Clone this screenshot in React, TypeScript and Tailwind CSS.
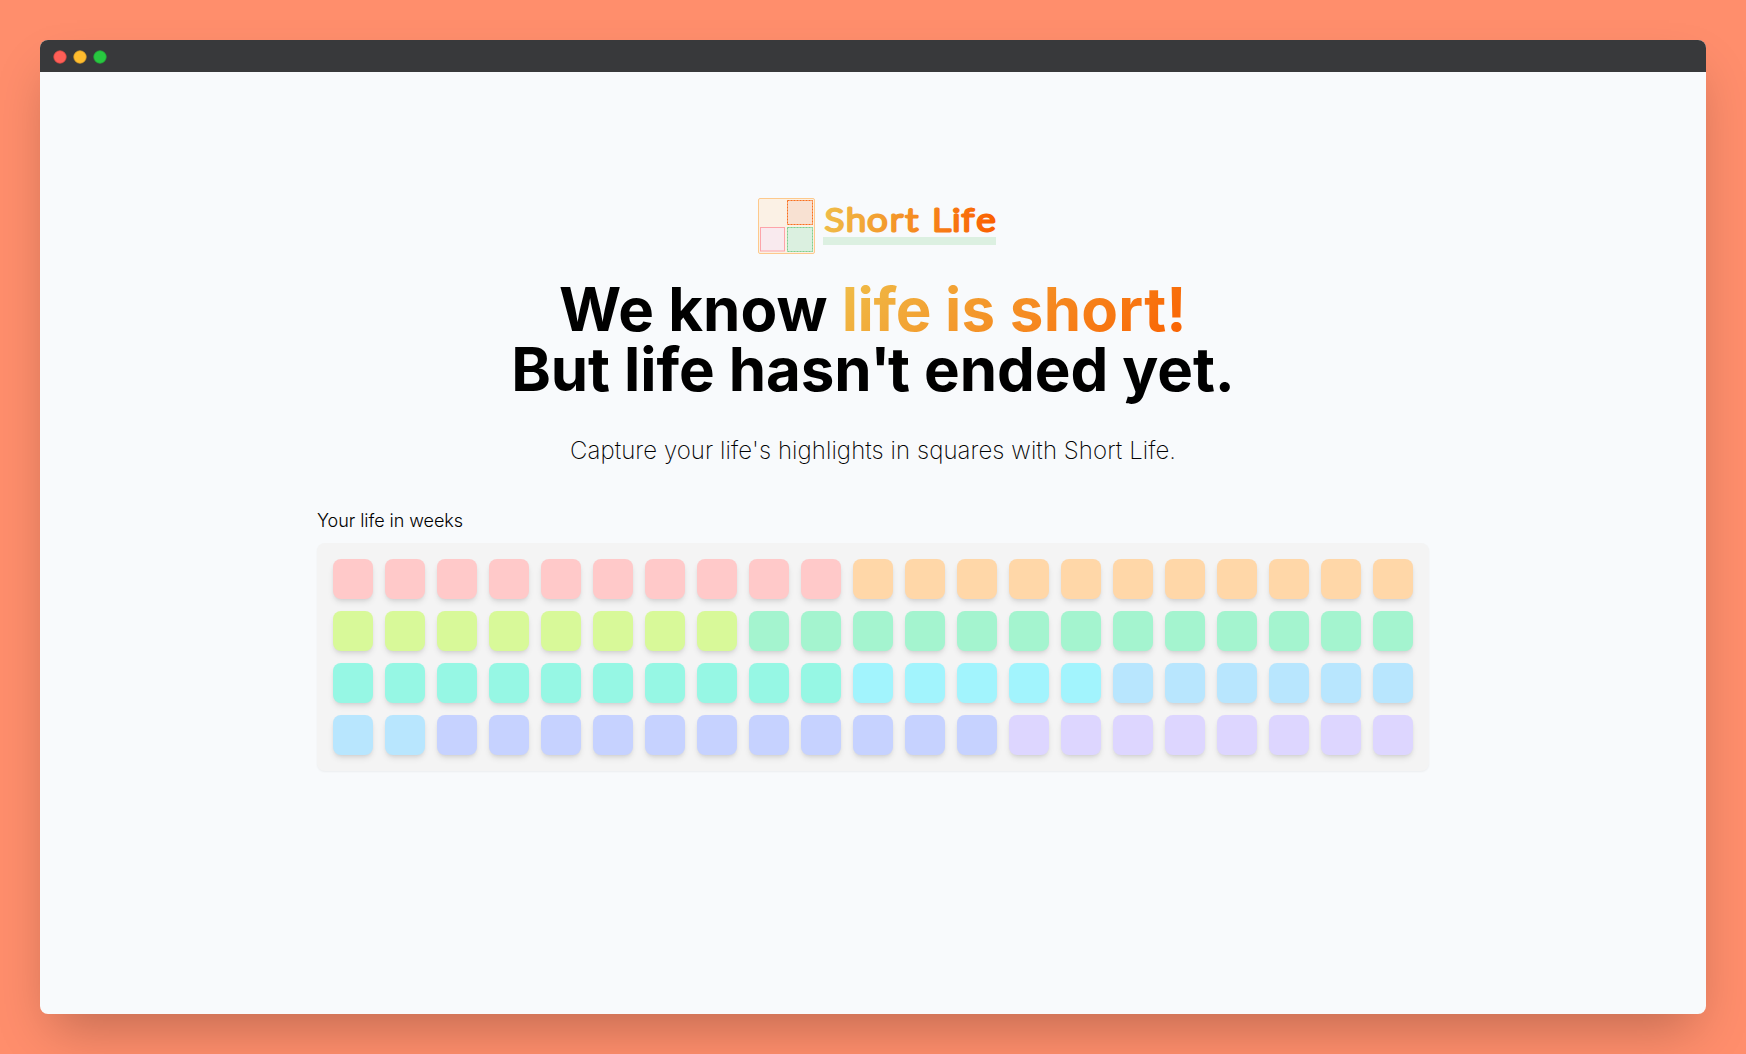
const weeks: { color: string; count: number }[] = [
  { color: 'bg-red-200', count: 10 },
  { color: 'bg-orange-200', count: 11 },
  { color: 'bg-lime-200', count: 8 },
  { color: 'bg-emerald-200', count: 13 },
  { color: 'bg-teal-200', count: 10 },
  { color: 'bg-cyan-200', count: 5 },
  { color: 'bg-sky-200', count: 8 },
  { color: 'bg-indigo-200', count: 11 },
  { color: 'bg-violet-200', count: 8 },
];

const squares = weeks.flatMap(({ color, count }) => Array.from({ length: count }, () => color));

function LogoMark() {
  return (
    <svg width="58" height="58" viewBox="0 0 58 58" fill="none" className="shrink-0">
      <rect x="1.5" y="1.5" width="56" height="55" rx="1.5" fill="#fbf1e5" stroke="#fdc98c" />
      <rect x="30.5" y="3.5" width="25" height="24" fill="#f8e1d2" stroke="#fbcaa8" />
      <rect x="30.5" y="3.5" width="25" height="24" stroke="#f86f1e" strokeDasharray="2 1" />
      <rect x="3.5" y="30.5" width="24" height="23.5" fill="#f9eaee" stroke="#fda4aa" />
      <rect x="30.5" y="30.5" width="25" height="24" fill="#dbf0e0" stroke="#c3e8cb" />
      <rect x="30.5" y="30.5" width="25" height="24" stroke="#7fcf8f" strokeDasharray="2 1" />
    </svg>
  );
}

function Wordmark() {
  return (
    <svg width="173" height="58" viewBox="0 0 173 58" className="shrink-0">
      <defs>
        <linearGradient id="sunset" gradientUnits="userSpaceOnUse" x1="0" y1="0" x2="146" y2="20">
          <stop offset="0" stopColor="#efbf4a" />
          <stop offset="1" stopColor="#fa6000" />
        </linearGradient>
      </defs>
      <rect x="0" y="40" width="173" height="8" fill="#dcf0e1" />
      <text
        transform="scale(1.18 1)"
        x="1.6 19.6 37.6 56.7 70 82.5 92.7 109.6 117.6 130"
        y="34.5"
        fill="url(#sunset)"
        stroke="url(#sunset)"
        strokeWidth="2.9"
        strokeLinejoin="round"
        className="font-['Lato',sans-serif] text-[30.8px] font-light"
      >
        Short Life
      </text>
    </svg>
  );
}

function WindowButtons() {
  return (
    <svg width="56" height="14" viewBox="0 0 56 14" strokeWidth="0.8">
      <circle cx="8" cy="7" r="6.2" fill="#ff5f57" stroke="#e24b45" />
      <circle cx="28" cy="7" r="6.2" fill="#ffbd2e" stroke="#e0a52a" />
      <circle cx="48" cy="7" r="6.2" fill="#28c840" stroke="#22b038" />
    </svg>
  );
}

export default function App() {
  return (
    <div className="h-[1054px] w-[1746px] overflow-hidden bg-[#ff8e6c] p-10 font-['Inter',sans-serif] text-black">
      <div className="flex h-[974px] flex-col overflow-hidden rounded-lg bg-slate-50 shadow-2xl">
        <div className="flex h-8 shrink-0 items-center bg-[#38393b] pt-0.5 pl-3">
          <WindowButtons />
        </div>
        <main className="flex flex-col items-center pt-[125px]">
          <div className="flex gap-2 pl-[7px]">
            <LogoMark />
            <Wordmark />
          </div>
          <h1 className="mt-6 flex flex-col items-center text-6xl leading-none font-bold">
            <span className="block">
              We know{' '}
              <span className="bg-linear-135/srgb from-[#efbf4a] to-[#fa6000] bg-clip-text text-transparent">
                <span className="tracking-[-0.35px]">life </span>
                <span className="tracking-[0.25px]">is short!</span>
              </span>
            </span>
            <span className="block tracking-[-0.08px]">
              But life has
              <span className="tracking-[-1.3px]">n</span>
              <span className="tracking-[-2.6px]">'</span>t ended yet.
            </span>
          </h1>
          <p className="mt-9 text-2xl leading-[31px] font-extralight tracking-[0.07px]">
            Capture your life's highlights in squares with Short Life.
          </p>
          <section className="mt-[41px] w-[1112px]">
            <h2 className="mb-[9px] text-lg leading-[27px] font-light tracking-[-0.05px]">Your life in weeks</h2>
            <div className="grid grid-cols-[repeat(21,40px)] gap-3 rounded-lg bg-[#f4f4f4] p-4 shadow-xs">
              {squares.map((color, i) => (
                <div key={i} className={`size-10 rounded-lg shadow-md ${color}`} />
              ))}
            </div>
          </section>
        </main>
      </div>
    </div>
  );
}
